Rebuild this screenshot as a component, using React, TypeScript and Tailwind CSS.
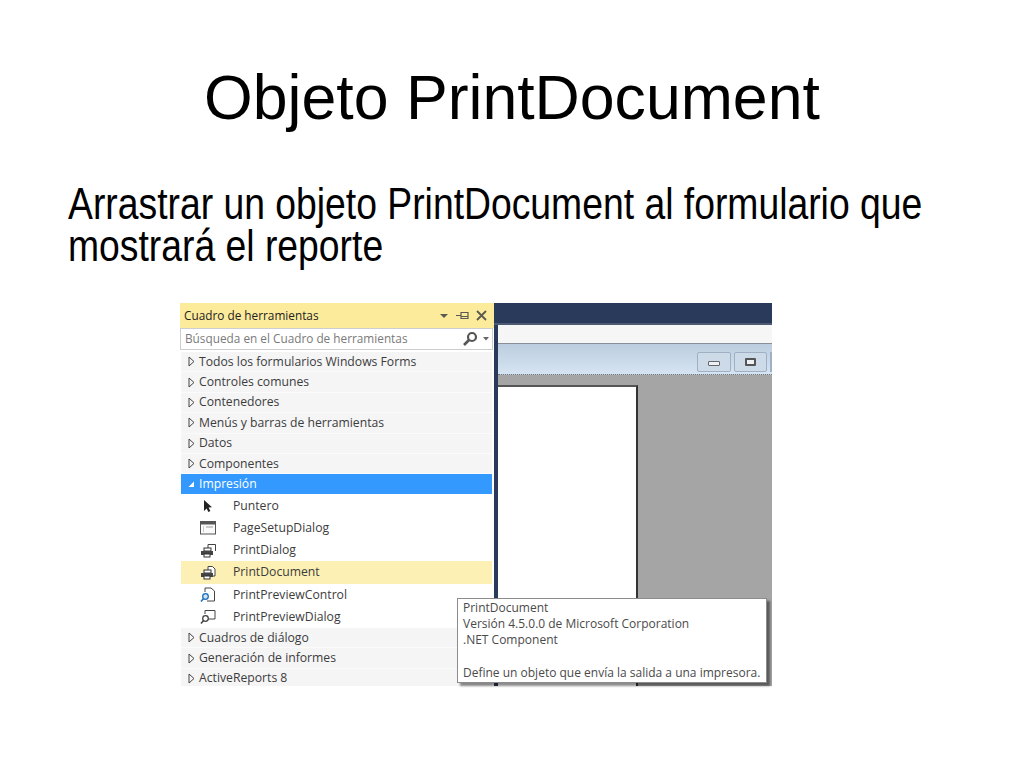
const Arrow = () => (
  <svg width="7" height="11" viewBox="0 0 7 11" className="shrink-0">
    <path d="M1 1 L6 5.5 L1 10 Z" fill="#f5f5f5" stroke="#444" strokeWidth="1" />
  </svg>
);

const Cat = ({ label, h = 'h-[20.4px]' }: { label: string; h?: string }) => (
  <div className={`${h} shrink-0 flex items-center gap-[4px] pl-[7px] bg-[#f5f5f6] border-b border-[#fbfbfb] text-[12.2px] text-[#3c3c3c]`}>
    <Arrow />
    <span>{label}</span>
  </div>
);

const Cursor = () => (
  <svg width="12" height="14" viewBox="0 0 12 14">
    <path d="M2 1 L2 12 L4.6 9.4 L6.4 13 L8.4 12 L6.6 8.6 L10 8.2 Z" fill="#222" />
  </svg>
);
const PageSetup = () => (
  <svg width="16" height="14" viewBox="0 0 16 14">
    <rect x="0.5" y="0.5" width="15" height="12.5" fill="#fafafa" stroke="#555" />
    <rect x="1" y="1" width="14" height="2.5" fill="#555" />
    <path d="M3 6h1M3 8h1M3 10h1M6 6h7" stroke="#999" strokeWidth="1" />
  </svg>
);
const Printer = ({ doc }: { doc?: boolean }) => (
  <svg width="16" height="15" viewBox="0 0 16 15">
    {doc ? (
      <path d="M8 6V1.5h4.5L15 4v7h-2" fill="#fff" stroke="#444" />
    ) : (
      <path d="M8 1.5h7.5V8M8 1.5V5" fill="none" stroke="#444" />
    )}
    <rect x="4" y="5" width="7" height="3" fill="#fff" stroke="#333" />
    <rect x="1" y="8" width="12" height="4" fill="#444" />
    <rect x="4" y="11" width="6" height="3" fill="#fff" stroke="#333" />
  </svg>
);
const Preview = ({ blue }: { blue?: boolean }) => (
  <svg width="16" height="16" viewBox="0 0 16 16">
    {blue ? (
      <path d="M5 5V1h6l3.5 3v10H7" fill="#fff" stroke="#444" />
    ) : (
      <path d="M5 5V1.5h10V10H8" fill="none" stroke="#444" />
    )}
    <circle cx="5.5" cy="9.5" r="2.8" fill={blue ? '#cfe4f7' : '#fff'} stroke={blue ? '#1e6fb8' : '#444'} strokeWidth="1.3" />
    <path d="M3.4 11.8 L1 14.5" stroke={blue ? '#1e6fb8' : '#444'} strokeWidth="1.6" />
  </svg>
);

const Item = ({ icon, label, selected }: { icon: React.ReactNode; label: string; selected?: boolean }) => (
  <div className={`h-[22.2px] shrink-0 flex items-center text-[12.2px] text-[#3c3c3c] ${selected ? 'bg-[#fdf0b4]' : 'bg-white'}`}>
    <div className="w-[52px] pl-[2px] flex justify-center shrink-0">{icon}</div>
    <span>{label}</span>
  </div>
);

export default function App() {
  return (
    <div className="w-[1024px] h-[768px] bg-white overflow-hidden font-['Liberation_Sans',sans-serif] text-black">
      <h1 className="pt-[60px] h-[152px] text-center text-[62.6px] leading-[74px]">Objeto PrintDocument</h1>
      <p className="ml-[68px] mt-[31px] w-[1100px] origin-left scale-x-[0.829] text-[45px] leading-[41.5px] whitespace-nowrap">
        Arrastrar un objeto PrintDocument al formulario que
        <br />
        mostrará el reporte
      </p>
      <div className="relative ml-[180px] mt-[37px] w-[592px] h-[383px] flex font-['Open_Sans',sans-serif]">
        <div className="w-[314px] h-[383px] overflow-hidden shrink-0 bg-white flex flex-col pl-[1px]">
          <div className="h-[25px] shrink-0 -ml-[1px] bg-[#fdeb9c] flex items-center justify-between pl-[4px] pr-[7px] text-[11.8px] text-[#222]">
            <span>Cuadro de herramientas</span>
            <div className="flex items-center gap-[7px]">
              <svg width="10" height="6" viewBox="0 0 10 6"><path d="M1 1h8L5 5Z" fill="#5a5a50" /></svg>
              <svg width="13" height="9" viewBox="0 0 13 9"><path d="M0 4.5h5M5 1.5h7v6H5ZM5 5.5h7" fill="none" stroke="#5a5a50" strokeWidth="1.2" /></svg>
              <svg width="11" height="11" viewBox="0 0 11 11"><path d="M1 1l9 9M10 1l-9 9" stroke="#5a5a50" strokeWidth="1.8" /></svg>
            </div>
          </div>
          <div className="h-[22px] shrink-0 -ml-[1px] mr-[1px] bg-white border border-[#ccced1] flex items-center justify-between pl-[4px] pr-[3px] text-[11.8px] text-[#7a7a7a]">
            <span>Búsqueda en el Cuadro de herramientas</span>
            <div className="flex items-center gap-[5px]">
              <svg width="16" height="16" viewBox="0 0 16 16"><circle cx="10" cy="6" r="4" fill="none" stroke="#555" strokeWidth="2.2" /><path d="M7 9l-5 5" stroke="#555" strokeWidth="2.6" /></svg>
              <svg width="6" height="4" viewBox="0 0 6 4"><path d="M0 0h6L3 3.5Z" fill="#666" /></svg>
            </div>
          </div>
          <div className="pr-[2px] flex flex-col pt-[2px]">
            <Cat label="Todos los formularios Windows Forms" />
            <Cat label="Controles comunes" />
            <Cat label="Contenedores" />
            <Cat label="Menús y barras de herramientas" />
            <Cat label="Datos" />
            <Cat label="Componentes" />
            <div className="h-[19.5px] shrink-0 flex items-center gap-[4px] pl-[6px] bg-[#3399ff] text-[12.2px] text-white">
              <svg width="8" height="8" viewBox="0 0 8 8"><path d="M7 1.5V7H1.5Z" fill="#fff" /></svg>
              <span>Impresión</span>
            </div>
            <div className="flex flex-col pt-[1px]">
              <Item icon={<Cursor />} label="Puntero" />
              <Item icon={<PageSetup />} label="PageSetupDialog" />
              <Item icon={<Printer />} label="PrintDialog" />
              <Item icon={<Printer doc />} label="PrintDocument" selected />
              <Item icon={<Preview blue />} label="PrintPreviewControl" />
              <Item icon={<Preview />} label="PrintPreviewDialog" />
            </div>
            <Cat label="Cuadros de diálogo" />
            <Cat label="Generación de informes" />
            <Cat label="ActiveReports 8" />
          </div>
        </div>
        <div className="flex-1 flex flex-col bg-[#2a3a5a] pl-[4px]">
          <div className="h-[22px] shrink-0 -ml-[4px] bg-[#2a3a5a] border-b-2 border-[#4d5a74]" />
          <div className="h-[19px] shrink-0 bg-[#f6f6f6] border-b border-[#8a8f99]" />
          <div className="h-[31px] shrink-0 bg-gradient-to-b from-[#bccddf] to-[#d6e4f2] border-b border-dotted border-[#777] flex items-start justify-end gap-[3px] pt-[8px]">
            <div className="w-[34px] h-[20px] border border-[#9fb0c4] rounded-[2px] bg-[#cddbe9] flex items-center justify-center">
              <div className="w-[12px] h-[5px] mt-[3px] bg-[#eef2f6] border border-[#666] rounded-[1px]" />
            </div>
            <div className="w-[33px] h-[20px] border border-[#9fb0c4] rounded-[2px] bg-[#cddbe9] flex items-center justify-center">
              <div className="w-[11px] h-[8px] bg-[#eef2f6] border-2 border-[#555] rounded-[1px]" />
            </div>
            <div className="w-[2px] h-[20px] bg-[#9fb0c4]" />
          </div>
          <div className="flex-1 min-h-0 bg-[#a5a5a5] pt-[10px] overflow-hidden">
            <div className="w-[140px] h-full bg-white border-t-2 border-r-2 border-[#333] border-t-[#555]" />
          </div>
        </div>
        <div className="absolute left-[277px] top-[295px] w-[310px] h-[85px] bg-white border border-[#8c8c8c] shadow-[3px_3px_2px_rgba(0,0,0,0.45)] pl-[5px] pt-[1px] text-[12px] leading-[16.2px] text-[#4a4a4a]">
          <div>PrintDocument</div>
          <div>Versión 4.5.0.0 de Microsoft Corporation</div>
          <div>.NET Component</div>
          <div className="mt-[16px]">Define un objeto que envía la salida a una impresora.</div>
        </div>
      </div>
    </div>
  );
}
